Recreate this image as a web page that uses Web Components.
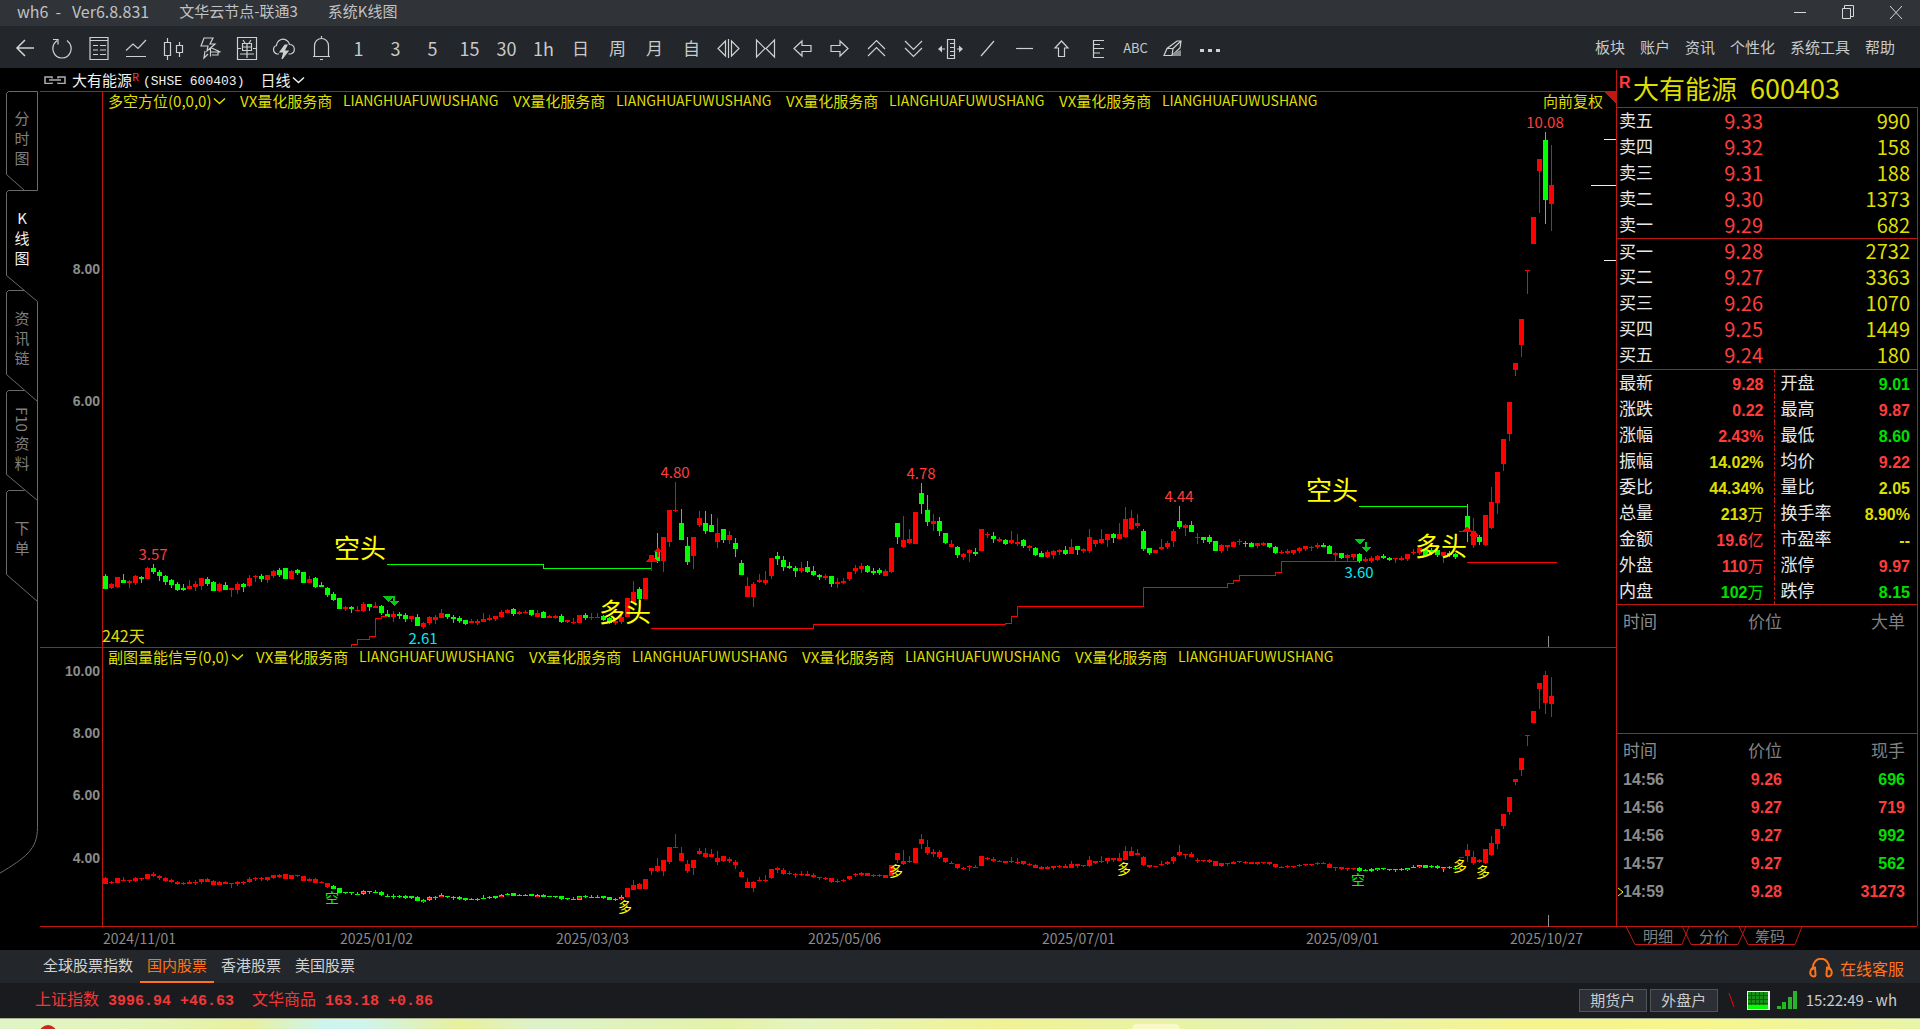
<!DOCTYPE html>
<html lang="zh-CN">
<head>
<meta charset="utf-8">
<title>wh6 - 系统K线图</title>
<style>
html { background: #000; }
body { margin: 0; color: #c8cacc; font: 15px/20px "Noto Sans CJK SC", sans-serif;
  --line: #c01810; --up: #ff3c3c; --down: #00e000; --gold: #dede00; --grey: #808080; overflow-x: hidden; }
</style>
</head>
<body>
<wh-app></wh-app>
<script>
const base = `:host,*{box-sizing:border-box}
button{font:inherit;color:inherit;background:none;border:0;margin:0;padding:0;cursor:pointer}
svg{display:block}`;

function define(name, css, html, init) {
  const t = document.createElement('template');
  t.innerHTML = `<style>${base}${css}</style>${html}`;
  customElements.define(name, class extends HTMLElement {
    constructor() {
      super();
      this.attachShadow({ mode: 'open' }).append(t.content.cloneNode(true));
      if (init) init(this.shadowRoot, this);
    }
  });
}

/* ---------- title bar ---------- */
define('title-bar', `
:host{display:flex;height:26px;align-items:center;background:#303338;color:#c0c2c4;padding:0 0 2px 17px}
.t{display:flex;gap:30px;flex:1;white-space:pre;padding-bottom:2px}
.t span:first-child{font-size:16px}
.w{display:flex}
.w button{width:48px;height:24px;display:grid;place-items:center}
svg{fill:none;stroke:#d8d8d8}`,
`<div class="t"><span>wh6  -   Ver6.8.831</span><span>文华云节点-联通3</span><span>系统K线图</span></div>
<div class="w">
<button aria-label="最小化"><svg width="14" height="14"><path d="M1 7.500h12"/></svg></button>
<button aria-label="还原"><svg width="14" height="16"><path d="M1.500 4.500h8v10h-8zM3.500 4V1.500h9v11H10"/></svg></button>
<button aria-label="关闭"><svg width="14" height="14"><path d="M1 1l12 13M13 1L1 14"/></svg></button>
</div>`);

/* ---------- tool bar ---------- */
const icons = [
 ['返回','<path d="M21 12H4M12 4l-8 8 8 8" stroke-width="1.600"/>'],
 ['刷新','<path d="M7 4.500C3 8 2 12 3.500 16c3 8 14 8 17 0 1.500-4 .5-8-3.500-11.500M3 3.500h5v5" />'],
 ['报价','<path d="M3 1.500h18v22H3zM3 4.500h18M6 9.500h5M13 9.500h6M6 14h5M13 14h6M6 18.500h5M13 18.500h6"/>'],
 ['分时','<path d="M2 14.500l7-6.500 5 4.500L22 4M2 20.500h20"/>'],
 ['K线','<path d="M3.500 6.500h6v13h-6zM6.500 2v4M6.500 20v4M15.500 9.500h6v7h-6zM18.500 6v3M18.500 17v4"/>'],
 ['闪电下单','<path d="M6 2h9l-3 6h5l-8 7 1-5H3zM7 15l-1 7 4-4M12.500 11.500v9M12.500 11.500l10 4.500h-10M14 19h6v-3"/>'],
 ['单','<path d="M2.500 1.500h19v22h-19zM6 12.500H2M22 12.500h-4M8 4l2 3M16 4l-2 3M7.500 7.500h9v7h-9zM7.500 11h9M12 7v15M5 18h14"/>'],
 ['云','<path d="M7 18H5C1 17 0 11 4.500 9.500 5 4 11 1 15.500 5c1 .8 1.500 2 2 3.500 6 0 6.500 8 1 9.500h-2"/><path d="M13 9l-5 7h4l-2 7 6-8h-4l3-6z" fill="#d0d0d0"/>'],
 ['预警','<path d="M4 20.500h17M5.500 20V10c0-10 14-10 14 0v10M12.500 0v2M11 23.500h3"/>'],
 '1','3','5','15','30','1h','日','周','月','自',
 ['缩放','<path d="M9.500 5v15L2 12.500zM15.500 5v15l7.500-7.500zM12.500 3v19"/>'],
 ['收缩','<path d="M3.500 4v17L12 12.500zM21.500 4v17L13 12.500z"/>'],
 ['左移','<path d="M4 12.500L12 5v4.500h9v6h-9V20z"/>'],
 ['右移','<path d="M21 12.500L13 5v4.500H4v6h9V20z"/>'],
 ['上翻','<path d="M4 13l8.500-8.500L21 13M4 20l8.500-8.500L21 20"/>'],
 ['下翻','<path d="M4 12l8.500 8.500L21 12M4 5l8.500 8.500L21 5"/>'],
 ['区间','<path d="M9.500 3.500h7v19h-7zM12 7.500h4M12 11.500h4M12 15.500h4M12 19.500h4M1 13h6M19 13h5"/><path d="M0 13l4-3.500v7zM25 13l-4-3.500v7z" fill="#d0d0d0" stroke="none"/>'],
 ['斜线','<path d="M6 20L19 5"/>'],
 ['横线','<path d="M4 12.500h17"/>'],
 ['箭头','<path d="M12.500 5l6.500 7h-3.500v8.500h-6V12H6z"/>'],
 ['刻度','<path d="M18 4.500H7.500v17H18M8 8.500h6M8 12.500h10M8 17h6"/>'],
 'ABC',
 ['橡皮','<path d="M4 19.500l3-7L17 5h4l-1 7-8 7.500zM7 12.500h6l-1 7M13 12.500L21 5"/><path d="M13 20v-3l8-3v6z" fill="#8a8c8e" stroke="none"/>'],
 ['更多','<path d="M3 13h4v3H3zM11 13h4v3h-4zM19 13h4v3h-4z" fill="#d0d0d0" stroke="none"/>'],
];
define('tool-bar', `
:host{display:flex;height:42px;align-items:center;background:#23262a;padding:2px 25px 0 7px;color:#c8cacc}
.i{display:flex;flex:1}
.i button{width:37px;height:36px;display:grid;place-items:center;font:18px/24px "Noto Sans CJK SC",sans-serif}
.i button.zh{font-size:17px}
.i button.abc{font-size:13px}
.m{display:flex;gap:15px;white-space:nowrap;padding-bottom:3px}
svg{fill:none;stroke:#d0d0d0;stroke-width:1.2}`,
`<div class="i"></div><div class="m"><button>板块</button><button>账户</button><button>资讯</button><button>个性化</button><button>系统工具</button><button>帮助</button></div>`,
root => {
  root.querySelector('.i').innerHTML = icons.map(k => typeof k === 'string'
    ? `<button class="${k === 'ABC' ? 'abc' : /[\u4e00-\u9fff]/.test(k) ? 'zh' : ''}">${k}</button>`
    : `<button aria-label="${k[0]}"><svg width="25" height="25">${k[1]}</svg></button>`).join('');
});

/* ---------- side tabs ---------- */
define('side-tabs', `
:host{display:block;position:relative;padding-top:23px;color:var(--grey)}
svg{position:absolute;left:0;top:23px;fill:none;stroke:#6a6a6a}
nav{display:flex;flex-direction:column;position:relative}
button{height:100px;width:40px;padding:17px 0 0 4px;display:flex;flex-direction:column;align-items:center;line-height:20px}
button[aria-current]{color:#f0f0f0}
.r{writing-mode:vertical-rl;height:28px;line-height:20px}
.f{padding-top:14px}
.d{padding-top:27px}`,
`<svg width="40" height="790"><path d="M37.500 99.500V.5H8.500l-2 2v81l18 16M37.500 99.500H8.500l-2 2v83l31 26M24.500 199.500h-16l-2 2v82l31 27M24.500 299.500h-16l-2 2v82l31 26M24.500 399.500h-16l-2 2v82l31 27M37.500 210.500v526c0 22-12 30-38 46"/></svg>
<nav>
<button><span>分</span><span>时</span><span>图</span></button>
<button aria-current="page"><span>K</span><span>线</span><span>图</span></button>
<button><span>资</span><span>讯</span><span>链</span></button>
<button class="f"><span class="r">F10</span><span>资</span><span>料</span></button>
<button class="d"><span>下</span><span>单</span></button>
</nav>`);

/* ---------- candles: side, high, body top, body bottom, low (thirds of a pixel) ---------- */
const candles = `g342,348,387,387 r369,372,384,387 r351,351,381,384 g342,360,369,370 r360,363,369,384 r345,348,369,375 g348,351,357,370 r321,324,357,357 g312,324,336,342 g330,336,348,363
g345,348,366,375 g357,360,375,384 g366,372,390,392 g372,384,390,392 r360,378,387,387 r363,372,381,392 r354,354,378,390 g351,357,372,378 g363,366,393,393 r369,372,393,396
g366,375,390,390 r384,384,390,411 r366,372,390,402 g369,372,381,396 r345,354,378,381 r345,348,351,366 g342,348,357,366 r345,345,360,369 r330,333,348,354 g324,330,345,351
g324,324,357,357 r330,333,357,357 g327,330,339,345 g336,336,369,369 r348,357,369,369 g351,354,381,384 g366,375,381,381 g381,384,405,411 g396,402,420,423 g414,414,447,447
r438,441,447,453 g438,441,447,459 r438,450,453,453 r426,432,453,456 g432,432,441,453 r426,438,443,444 g435,438,459,465 g450,462,471,471 r453,462,471,486 g456,462,468,477
g459,465,477,486 r468,468,477,486 g462,471,498,498 r486,489,501,507 r468,471,489,495 r465,471,480,492 r447,459,474,474 g462,462,471,477 g465,471,477,489 g468,474,483,489
g480,480,492,495 r477,483,489,489 r477,483,489,495 r459,477,486,486 r465,474,480,483 r468,468,477,483 r450,456,471,474 r447,450,459,459 g444,447,462,468 r453,456,462,465
r450,456,459,459 g450,450,465,468 r450,459,471,471 g453,456,474,474 r465,468,474,474 r465,468,474,477 g462,468,486,489 r480,480,486,489 r474,486,489,492 r465,465,489,489
g459,465,474,480 r459,471,474,480 r459,471,474,474 g465,468,480,483 g471,474,489,492 r477,483,489,495 r456,471,486,492 r414,414,471,471 r363,396,426,426 g381,387,417,420
r354,354,417,417 r285,285,305,333 g219,270,303,309 r231,231,303,336 r150,150,246,261 r66,150,153,156 g147,189,240,240 g231,258,306,315 r231,231,288,327 r153,174,195,201
g153,189,213,222 g162,195,216,216 r174,219,246,264 g207,207,240,249 r213,225,240,252 g234,249,267,291 g300,309,345,345 r351,378,411,411 r366,372,411,441 r342,360,366,369
r333,360,369,375 r294,294,348,357 g276,288,297,315 g288,300,321,333 g306,318,324,327 g318,324,333,351 r306,324,333,339 g303,321,336,339 g318,333,345,348 g342,345,351,360
r342,348,354,360 g348,348,372,381 r354,366,372,384 r354,363,369,372 r336,336,357,363 r315,324,333,342 r309,318,327,339 g315,318,336,339 g324,333,339,345 g324,330,339,345
r327,333,348,348 r264,264,336,339 g189,189,231,252 r168,240,261,264 r207,237,249,252 r156,156,252,252 g69,99,132,162 g105,150,186,198 r162,183,192,213 g171,183,213,228
g219,219,249,252 r240,252,261,261 g258,261,285,294 r279,282,291,300 r267,270,279,306 g264,276,282,288 r207,207,273,273 r216,222,225,234 g216,228,237,249 r231,237,243,246
g237,240,252,255 r213,240,249,252 r222,246,252,258 g237,240,258,264 r255,258,264,273 g261,264,285,288 g273,279,291,291 r270,276,291,294 r270,273,285,297 r267,270,276,285
g258,270,282,285 r237,261,282,282 g258,258,270,285 r264,267,273,279 r207,231,273,279 r240,240,252,261 r207,237,249,252 r222,222,240,261 g219,222,234,249 r189,222,237,237
r141,177,231,234 r150,174,207,210 r162,189,198,204 g207,213,267,273 g264,264,279,285 r270,270,279,279 r237,261,267,270 r243,249,261,267 r207,213,243,261 g138,183,201,207
r192,195,204,228 g183,195,216,216 r219,231,234,252 g231,231,240,249 g225,231,246,252 g243,243,273,273 r252,255,273,279 r255,255,261,273 r243,246,261,261 r237,243,246,255
g243,249,252,261 g246,249,261,261 r249,249,258,264 r246,249,255,258 g249,249,261,264 g258,261,279,282 r270,276,279,282 r267,273,279,282 r270,270,279,285 r261,264,273,279
r258,258,267,273 r258,261,264,273 r249,255,261,267 g249,255,261,261 g255,258,282,282 r276,279,285,303 g279,279,294,297 r282,285,294,303 r282,282,291,300 g279,282,303,309
r291,297,303,306 r288,294,303,309 r285,288,300,303 g282,288,294,297 g291,294,300,303 r294,294,297,309 r288,294,300,303 r282,282,297,303 r267,276,279,285 r264,264,279,285
g264,267,285,288 g264,270,279,285 g267,270,285,291 r276,276,288,309 g273,279,285,291 g279,282,291,297 r213,213,216,216 g132,168,207,246 r174,213,255,264 g225,231,246,255
r165,165,255,258 r81,126,204,207 r36,36,129,162 r-63,-63,12,33 r-174,-174,-78,-57 r-291,-291,-270,-252 r-423,-423,-345,-309 r-570,-570,-567,-498 r-729,-729,-648,-648
r-903,-903,-867,-741 g-984,-960,-780,-708 r-945,-825,-768,-687`.split(/\s+/).map(s => [s[0], ...s.slice(1).split(',').map(Number)]);

const RED = '#ff0000', GREEN = '#00ff00';
const rect = (x, y, w, h, c) => `<rect x="${x}" y="${y}" width="${w}" height="${Math.max(1, h)}" fill="${c}"/>`;
function drawCandles(toY, paint) {
  return candles.map(([side, ...v], i) => {
    const x = 65 + 6 * i, [h, t, b, l] = v.map(n => Math.round(toY(n / 3 + 369)));
    const { color, core } = paint(side, i, v);
    return rect(x, h, 1, l - h, color) + rect(x - 2, t, 5, b - t, color) +
      (core ? rect(x - 1, t + 1, 3, b - t - 2, RED) : '');
  }).join('');
}
const bear = i => (i >= 38 && i <= 86) || (i >= 209 && i <= 225);
const repeatText = Array(4).fill('<span class="v">VX量化服务商</span><span class="l">LIANGHUAFUWUSHANG</span>').join('');
const chevron = '<svg width="13" height="8"><path d="M1 1.500l5.500 5 5.500-5" fill="none" stroke="currentColor" stroke-width="1.500"/></svg>';

define('k-chart', `
:host{display:block;min-width:0}
header{height:23px;display:flex;align-items:center;padding-left:4px;color:#f0f0f0;white-space:pre}
header .n{margin-left:6px}
header sup{color:var(--up);font-size:11px;line-height:10px;align-self:flex-start;margin-top:3px}
header .c{font:13px/20px "Liberation Mono",monospace;margin:0 16px 0 4px;padding-top:4px}
header button,.legend button{display:flex;align-items:center;gap:2px}
.pane{position:relative;border-top:1px solid var(--line)}
.main{height:556px}.sub{height:280px;border-bottom:1px solid var(--line)}
.pane>svg{position:absolute;left:0;top:-1px;width:100%;height:100%;overflow:visible}
.legend{position:relative;display:flex;color:var(--gold);padding-left:68px;height:18px;line-height:17px;white-space:nowrap}
.legend button{line-height:17px;height:17px}
.main .legend button{width:132px}.sub .legend button{width:148px}
.v{width:103px}.l{width:170px;font-size:14px}
.adj{margin-left:auto;padding-right:13px}
.dates svg{width:100%;height:23px}
text.y{font:bold 14px "Liberation Sans",sans-serif;fill:#8c8c8c;text-anchor:end}
text.a{font-size:26px;fill:#ffff00}
text.p{fill:var(--up);text-anchor:middle}
text.q{fill:#00e8f0;text-anchor:middle}
text.s{font-size:14px;text-anchor:middle}
text.d{font-size:14px;fill:#8c8c8c}
.g{shape-rendering:crispEdges}`,
`<header><svg width="22" height="8" fill="none" stroke="#b0b0b0" stroke-width="1.500"><path d="M8 6.500v1H1V1h7v1.500M5 4h12M14 2.500V1h7v6.500h-7v-1"/></svg><span class="n">大有能源</span><sup>R</sup><span class="c">(SHSE 600403)</span><button>日线${chevron}</button></header>
<section class="pane main"><svg></svg><div class="legend"><button>多空方位(0,0,0)${chevron}</button>${repeatText}<span class="adj">向前复权</span></div></section>
<section class="pane sub"><svg></svg><div class="legend"><button>副图量能信号(0,0)${chevron}</button>${repeatText}</div></section>
<div class="dates"><svg></svg></div>`,
root => {
  const [main, sub] = root.querySelectorAll('.pane > svg');
  const dates = root.querySelector('.dates svg');
  const axis = h => `<path d="M62.500 0V${h}" stroke="#c01810"/>`;
  main.innerHTML = `<g class="g">${axis(556)}
    <g>${drawCandles(y => y, s => ({ color: s === 'g' ? GREEN : RED }))}</g>
    <g fill="none" stroke="#ff0000" transform="translate(-40 -91)">
      <path d="M351.500 647V644.500H357.500V639.500H369.500V636.500H375.500V618.500H381.500V616.500H388"/>
      <path d="M651 628.500H813.500V624.500H1005.500V623.500H1011.500V616.500H1017.500V606.500H1143.500V587.500H1227.500V583.500H1233.500V580.500H1239.500V575.500H1275.500V572.500H1281.500V561.500H1359M1467 562.500H1557"/>
      <path stroke="#00ff00" d="M387 564.500H543.500V568.500H651M1359 506.500H1467"/>
    </g>
    <g fill="#00cc10" transform="translate(-40 -91)">
      <path d="M382 596h12l-6 6zM393 596h2v5h4l-5 5-5-5h4zM1354 539h11l-5 6zM1365 542h2v5h4l-5 5-5-5h4z"/>
      <path fill="#ff0000" d="M646 562h12l-6-7zM657 557v-5h-4l5-5 4 5h-3v5zM1462 532h10l-5-6zM1469 535l5-4 5 4-3 2h-4z"/>
    </g></g>
    <text class="y" x="60" y="183">8.00</text><text class="y" x="60" y="315">6.00</text>
    <text class="p" x="113" y="469">3.57</text><text class="p" x="635" y="387">4.80</text><text class="p" x="881" y="388">4.78</text>
    <text class="p" x="1139" y="411">4.44</text><text class="p" x="1505" y="37">10.08</text>
    <text class="q" x="383" y="553">2.61</text><text class="q" x="1319" y="487">3.60</text>
    <text class="a" x="294" y="467">空头</text><text class="a" x="559" y="531">多头</text>
    <text class="a" x="1266" y="409">空头</text><text class="a" x="1375" y="465">多头</text>
    <text x="62" y="551" font-size="16" fill="#dede00">242天</text>
    <path class="g" d="M1508.500 545v12" stroke="#909090"/>
    <svg x="100%" y="0" overflow="visible" class="g"><path d="M-12 48.500H0M-25 94.500H0M-12 169.500H0" stroke="#f0f0f0"/><path d="M-12 0H0V13z" fill="#c01810"/></svg>`;
  const mapY = y => 187 + (y - 391) * .466;
  sub.innerHTML = `<g class="g">${axis(279)}${drawCandles(mapY, (s, i, v) => bear(i)
      ? { color: GREEN, core: s === 'r' && v[2] - v[1] >= 12 } : { color: RED })}
    <path d="M1508.500 268v12" stroke="#909090"/></g>
    <text class="y" x="60" y="29">10.00</text><text class="y" x="60" y="91">8.00</text><text class="y" x="60" y="153">6.00</text><text class="y" x="60" y="216">4.00</text>
    <g fill="#00ff00"><text class="s" x="292" y="256">空</text><text class="s" x="1318" y="238">空</text></g>
    <g fill="#ffff00"><text class="s" x="585" y="265">多</text><text class="s" x="856" y="229">多</text><text class="s" x="1084" y="227">多</text><text class="s" x="1420" y="224">多</text><text class="s" x="1443" y="230">多</text></g>`;
  dates.innerHTML = [[63,'2024/11/01'],[300,'2025/01/02'],[516,'2025/03/03'],[768,'2025/05/06'],[1002,'2025/07/01'],[1266,'2025/09/01'],[1470,'2025/10/27']]
    .map(([x, t]) => `<text class="d" x="${x}" y="17">${t}</text>`).join('');
});

/* ---------- quote panel ---------- */
const book = [['卖五','9.33','990'],['卖四','9.32','158'],['卖三','9.31','188'],['卖二','9.30','1373'],['卖一','9.29','682'],
 ['买一','9.28','2732'],['买二','9.27','3363'],['买三','9.26','1070'],['买四','9.25','1449'],['买五','9.24','180']];
const stats = [['最新','u9.28','开盘','d9.01'],['涨跌','u0.22','最高','u9.87'],['涨幅','u2.43%','最低','d8.60'],['振幅','y14.02%','均价','u9.22'],
 ['委比','y44.34%','量比','y2.05'],['总量','y213万','换手率','y8.90%'],['金额','u19.6亿','市盈率','y--'],['外盘','u110万','涨停','u9.97'],['内盘','d102万','跌停','d8.15']];
const ticks = [['14:56','9.26','d696'],['14:56','9.27','u719'],['14:56','9.27','d992'],['14:57','9.27','d562'],['14:59','9.28','u31273']];
const cell = s => `<td class="${s[0]}">${s.slice(1).replace(/[万亿]/, '<i>$&</i>')}</td>`;
const tickCols = '<colgroup><col style="width:86px"><col style="width:79px"><col></colgroup>';

define('quote-panel', `
:host{display:block;padding-top:2px}
.box{border-left:1px solid var(--line);height:856px}
h1{margin:0;height:37px;display:flex;gap:13px;font:26px/36px "Noto Sans CJK SC",sans-serif;color:var(--gold)}
h1 b{font-weight:400;font-size:27px}
h1 sup{font:bold 16px/26px "Liberation Sans",sans-serif;color:var(--up);width:16px;padding-left:2px;margin-right:-13px}
.in{border:solid var(--line);border-width:1px 1px 0 0;margin-right:2px;height:819px}
table{border-collapse:collapse;width:100%;table-layout:fixed}
th{font-weight:400;text-align:left;padding:0}
td{padding:0;text-align:right}
.book{margin-bottom:1px}
.book th,.stats th{font-size:17px;color:#e8e8e8;padding-left:2px;line-height:24px;vertical-align:top}
.book td{font-size:20px;line-height:26px}
.book .y,.stats td:last-child{padding-right:7px}
.book tr,.stats tr{height:26px}
.book tbody+tbody{border-top:1px solid var(--line)}
.book tbody+tbody tr:first-child{height:25px}
.book tbody+tbody tr:first-child td{line-height:24px}
.stats{border-top:1px solid var(--line);border-bottom:1px solid var(--line)}
.stats td,.ticks td{font:bold 16px/23px "Liberation Sans","Noto Sans CJK SC",sans-serif}
.stats td{padding-top:3px}
.stats td:nth-child(2){padding-right:10px;border-right:1px dashed var(--line)}
.stats th:nth-child(3){padding-left:6px;white-space:nowrap}
.u{color:var(--up)}.d{color:var(--down)}.y{color:var(--gold)}
i{font-style:normal;font-weight:400}
.ticks thead th{font-size:17px;line-height:32px;height:32px;color:var(--grey);padding:0}
.ticks th:first-child,.ticks td:first-child{text-align:left;padding-left:6px;color:#8c8c8c}
.ticks thead th:nth-child(n+2){text-align:right}
.ticks tr>:last-child,.ticks thead th:last-child{padding-right:12px}
.ticks td{height:28px;line-height:26px}
.big{height:129px;border-bottom:1px solid var(--line)}
.now{position:relative}
.now svg{position:absolute;left:0;top:9px}
.tabs{position:relative;height:23px;display:flex;padding:0 0 0 27px;color:var(--grey)}
.tabs button{position:relative;width:56px;text-align:left;line-height:18px;height:19px}
.tabs svg{position:absolute;left:0;top:0;fill:none;stroke:#c01810;width:100%;height:20px}`,
`<div class="box"><h1><sup>R</sup><span>大有能源</span><b>600403</b></h1>
<div class="in">
<table class="book"><colgroup><col style="width:50px"><col style="width:96px"><col></colgroup><tbody></tbody><tbody></tbody></table>
<table class="stats"><colgroup><col style="width:50px"><col style="width:107px"><col style="width:58px"><col></colgroup><tbody></tbody></table>
<div class="big"><table class="ticks">${tickCols}<thead><tr><th>时间</th><th>价位</th><th>大单</th></tr></thead></table></div>
<table class="ticks">${tickCols}<thead><tr><th>时间</th><th>价位</th><th>现手</th></tr></thead><tbody></tbody></table>
</div></div>
<div class="tabs"><svg><path d="M0 .5H301M10 .5L19 18.500H66L73 .5H123L132 18.500H179L186 .5M66 0L75 18.500H122L130 .5"/></svg><button>明细</button><button>分价</button><button>筹码</button></div>`,
root => {
  const [a, b] = root.querySelectorAll('.book tbody');
  const row = r => `<tr><th scope="row">${r[0]}</th><td class="u">${r[1]}</td><td class="y">${r[2]}</td></tr>`;
  a.innerHTML = book.slice(0, 5).map(row).join('');
  b.innerHTML = book.slice(5).map(row).join('');
  root.querySelector('.stats tbody').innerHTML = stats.map(r =>
    `<tr><th scope="row">${r[0]}</th>${cell(r[1])}<th scope="row">${r[2]}</th>${cell(r[3])}</tr>`).join('');
  root.querySelector('.ticks tbody').innerHTML = ticks.map((r, i) =>
    `<tr><td class="now">${i === 4 ? '<svg width="7" height="10"><path d="M1 1l5 4-5 4" fill="none" stroke="#ffff00"/></svg>' : ''}${r[0]}</td><td class="u">${r[1]}</td>${cell(r[2])}</tr>`).join('');
});

/* ---------- bottom bars ---------- */
define('market-tabs', `
:host{display:flex;height:33px;background:#23262a;padding:0 16px 0 36px;color:#d0d2d4}
nav{display:flex;flex:1}
a{color:inherit;text-decoration:none;padding:0 7px;line-height:30px;height:33px;border-bottom:2px solid transparent}
a.on{color:#ff7418;border-color:#ff7418}
button{display:flex;align-items:center;gap:7px;color:#ff7418;font-size:16px;padding-top:2px}`,
`<nav><a href="#">全球股票指数</a><a href="#" class="on">国内股票</a><a href="#">香港股票</a><a href="#">美国股票</a></nav>
<button><svg width="24" height="20" fill="none" stroke="#ff7418" stroke-width="2"><path d="M4 12C2 -3 22 -3 20 12M6 9.500c-5-1-7 9-1 9 1.500 0 1.500-1 1.500-2zM18 9.500c5-1 7 9 1 9-1.500 0-1.500-1-1.500-2z"/></svg>在线客服</button>`);

define('status-bar', `
:host{display:flex;height:35px;background:#1a1b1f;align-items:center;padding:0 23px 1px 35px}
p{margin:0;flex:1;white-space:pre;color:#f03838;font:bold 15px/20px "Liberation Mono",monospace}
p span{font:16px/20px "Noto Sans CJK SC",sans-serif}
.b{display:flex;gap:3px}
.b button{width:68px;height:23px;border:1px solid #505358;background:#2c3036;line-height:20px}
.s{margin:0 12px 0 10px}.m{margin-right:7px}.k{margin-right:9px}`,
`<p><span>上证指数</span> 3996.94 +46.63  <span>文华商品</span> 163.18 +0.86</p>
<div class="b"><button>期货户</button><button>外盘户</button></div>
<svg class="s" width="7" height="15"><path d="M1 0l5 14" stroke="#ff0000"/></svg>
<svg class="m" width="23" height="19"><path d="M0 0h23v19H0z" fill="#f0f0f0"/><path d="M1 1h20v13H1z" fill="#189018"/><path d="M1 4.500h20M1 8.500h20M1 12.500h20M4.500 1v13M8.500 1v13M12.500 1v13M16.500 1v13" stroke="#0a5c0a"/><path d="M1 14h20v4H1z" fill="#00ff00"/></svg>
<svg class="k" width="20" height="19" fill="#28b428"><path d="M0 15h4v3H0zM5 11h4v7H5zM11 6h4v12h-4zM16 0h4v18h-4z"/></svg>
<span>15:22:49 - wh</span>`);

define('desk-strip', `
:host{display:block;height:11px;overflow:hidden;border-top:1px solid #a8b090;background:linear-gradient(90deg,#e0f4c8 0,#e4f4b8 8%,#e8f0a0 13%,#ccf4f0 17%,#d0f4ec 19%,#e8f09c 24%,#dcf2cc 28%,#e4f2a8 38%,#e4f4c0 42%,#f0f294 52%,#e4f2b4 67%,#f6f48c 80%,#f6f68c 89%,#e8f4a8 100%)}
svg{width:100%;height:10px}`,
`<svg><circle cx="48" cy="15" r="9" fill="#c82820"/><rect x="1132" y="5" width="48" height="20" rx="5" fill="#f8f8c8"/></svg>`);

define('wh-app', `
:host{display:flex;flex-direction:column;min-height:100vh;background:#000}
main{display:grid;grid-template-columns:40px minmax(0,1fr) 304px}`,
`<title-bar></title-bar><tool-bar></tool-bar>
<main><side-tabs></side-tabs><k-chart></k-chart><quote-panel></quote-panel></main>
<market-tabs></market-tabs><status-bar></status-bar><desk-strip></desk-strip>`);
</script>
</body>
</html>
